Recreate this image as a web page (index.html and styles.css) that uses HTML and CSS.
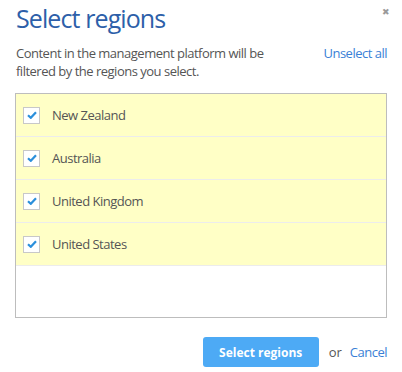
FILE: index.html
```html
<!DOCTYPE html>
<html>
<head>
<meta charset="utf-8">
<link rel="stylesheet" href="styles.css">
</head>
<body>
<div class="dialog">
  <div class="header">
    <h1 class="title">Select regions</h1>
    <span class="close">&#x2716;</span>
  </div>
  <div class="intro">
    <p class="desc">Content in the management platform will be filtered by the regions you select.</p>
    <a class="link unselect">Unselect all</a>
  </div>
  <div class="list">
    <div class="row"><span class="cb"><svg width="10" height="8" viewBox="0 0 10 8"><path d="M1 4.2 L3.8 6.8 L9 1.2" fill="none" stroke="#2b8fdb" stroke-width="2.2"/></svg></span><span class="label">New Zealand</span></div>
    <div class="row"><span class="cb"><svg width="10" height="8" viewBox="0 0 10 8"><path d="M1 4.2 L3.8 6.8 L9 1.2" fill="none" stroke="#2b8fdb" stroke-width="2.2"/></svg></span><span class="label">Australia</span></div>
    <div class="row"><span class="cb"><svg width="10" height="8" viewBox="0 0 10 8"><path d="M1 4.2 L3.8 6.8 L9 1.2" fill="none" stroke="#2b8fdb" stroke-width="2.2"/></svg></span><span class="label">United Kingdom</span></div>
    <div class="row"><span class="cb"><svg width="10" height="8" viewBox="0 0 10 8"><path d="M1 4.2 L3.8 6.8 L9 1.2" fill="none" stroke="#2b8fdb" stroke-width="2.2"/></svg></span><span class="label">United States</span></div>
  </div>
  <div class="footer">
    <button class="btn">Select regions</button>
    <span class="or">or</span>
    <a class="link">Cancel</a>
  </div>
</div>
</body>
</html>
```
FILE: styles.css
```css
* { box-sizing: border-box; }
html, body { margin: 0; padding: 0; background: #fff; }
body { font-family: "Open Sans", sans-serif; color: #555; }
.dialog { padding: 0 15px 0 15px; width: 402px; }
.header { display: flex; justify-content: space-between; align-items: flex-start; height: 44px; }
.title { margin: 0; font-size: 25px; letter-spacing: -0.9px; font-weight: 400; color: #2d5fa9; line-height: 36px; padding-left: 1px; }
.close { font-size: 9px; color: #9a9a9a; margin-top: 5px; margin-right: -3px; }
.intro { display: flex; justify-content: space-between; align-items: flex-start; height: 49px; }
.desc { margin: 0; font-size: 13px; letter-spacing: -0.5px; line-height: 18px; width: 260px; color: #555; padding-left: 1px; }
.link { color: #3a7fd6; font-size: 13px; letter-spacing: -0.5px; text-decoration: none; line-height: 18px; }
.list { border: 1px solid #bdbdbd; height: 225px; }
.row { height: 43px; background: #ffffc6; border-bottom: 1px solid #ececec; display: flex; align-items: center; padding-left: 7px; }
.cb { width: 17px; height: 17px; border: 1px solid #c8c8c8; background: #fff; display: flex; align-items: center; justify-content: center; margin-right: 12px; }
.label { font-size: 13px; letter-spacing: -0.5px; color: #555; }
.footer { display: flex; justify-content: flex-end; align-items: center; margin-top: 19px; }
.btn { width: 116px; height: 30px; background: #4daaf5; border: none; border-radius: 3px; color: #fff; font-family: "Open Sans", sans-serif; font-weight: 700; font-size: 12px; padding: 0; }
.or { font-size: 13px; margin: 0 8px 0 10px; color: #555; }
```
